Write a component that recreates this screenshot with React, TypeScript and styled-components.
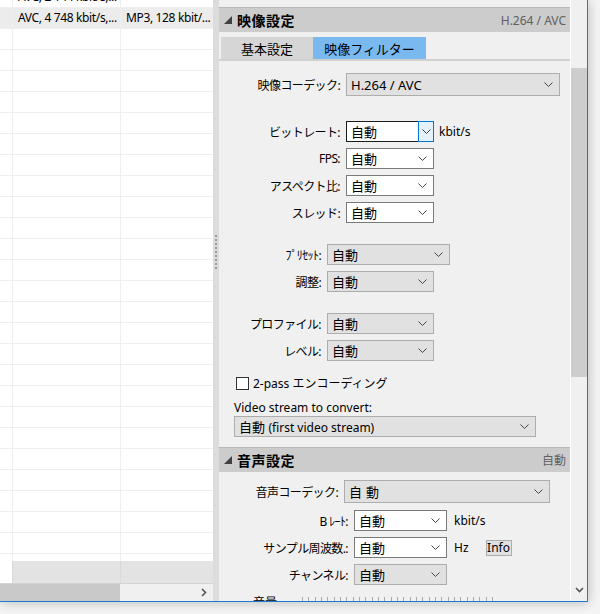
import styled, { createGlobalStyle } from "styled-components";

// Converter window: file list on the left, video/audio settings on the right.

const GlobalStyle = createGlobalStyle`
  html, body { margin: 0; padding: 0; background: #f4f4f4; }
  body {
    font-family: "Noto Sans", "Noto Sans CJK JP", sans-serif;
    font-size: 12px;
    color: #000;
  }
  #root { width: 600px; height: 614px; overflow: hidden; }
`;

const Window = styled.div`
  display: flex;
  width: 587px;
  height: 601px;
  background: #f0f0f0;
  border-right: 1px solid #1f79d1;
  border-bottom: 1px solid #1f79d1;
  box-shadow: 1px 1px 10px rgba(0, 0, 0, 0.22);
`;

/* ---------- left: file table ---------- */

const LeftPane = styled.div`
  width: 213px;
  display: flex;
  flex-direction: column;
`;
const Table = styled.div`
  flex: 1;
  overflow: hidden;
  background: #fff;
`;
const TableBody = styled.div`
  margin-top: -13px;
`;
const TRow = styled.div<{ $selected?: boolean }>`
  display: grid;
  grid-template-columns: 13px 108px 1fr;
  height: 21px;
  box-sizing: border-box;
  border-bottom: 1px solid #efefef;
  background: ${({ $selected }) => ($selected ? "#ececec" : "#fff")};
`;
const TCell = styled.div`
  box-sizing: border-box;
  border-right: 1px solid #efefef;
  padding-left: 5px;
  line-height: 20px;
  white-space: nowrap;
  overflow: hidden;
  letter-spacing: -0.35px;
  &:last-child { border-right: none; }
`;
const Footer = styled.div`
  display: grid;
  grid-template-columns: 13px 108px 1fr;
  height: 22px;
  background: #e3e3e3;
  border-bottom: 1px solid #d4d4d4;
  div { border-right: 1px solid #d9d9d9; }
  div:first-child { background: #fff; }
  div:last-child { border-right: none; }
`;
const HScroll = styled.div`
  height: 17px;
  display: flex;
  align-items: center;
  background: #f0f0f0;
`;
const HThumb = styled.div`
  width: 120px;
  height: 100%;
  background: #c9c9c9;
`;
const HArrow = styled.div`
  margin-left: auto;
  margin-right: 6px;
  display: flex;
`;

const Splitter = styled.div`
  width: 6px;
  background: #dcdcdc;
  display: flex;
  justify-content: center;
`;
const Grip = styled.div`
  margin-top: 235px;
  width: 2px;
  height: 34px;
  background: repeating-linear-gradient(to bottom, #9a9a9a 0 2px, transparent 2px 4px);
`;

/* ---------- right: settings ---------- */

const RightContent = styled.div`
  flex: 1;
  overflow: hidden;
  padding-top: 7px;
  display: flex;
  flex-direction: column;
`;
const SectionHeader = styled.div<{ $mt?: number }>`
  box-sizing: border-box;
  height: 25px;
  flex: none;
  margin-top: ${({ $mt }) => $mt ?? 0}px;
  display: flex;
  align-items: center;
  padding: 0 4px 0 5px;
  background: #cccccc;
  border-top: 1px solid #b8b8b8;
`;
const SectionTitle = styled.span`
  margin-left: 5px;
  font-size: 14px;
  font-weight: 700;
  letter-spacing: 0.5px;
`;
const SectionValue = styled.span`
  margin-left: auto;
  color: #606060;
  font-size: 12px;
`;
const TabStrip = styled.div`
  box-sizing: border-box;
  flex: none;
  height: 24px;
  margin-top: 5px;
  padding-left: 2px;
  display: flex;
  border-bottom: 2px solid #d0d0d0;
`;
const Tab = styled.div<{ $w: number; $active?: boolean }>`
  width: ${({ $w }) => $w}px;
  display: flex;
  align-items: center;
  justify-content: center;
  font-size: 13px;
  background: ${({ $active }) => ($active ? "#7ab9f0" : "#d6d6d6")};
`;
const Group = styled.div<{ $mt: number; $gap?: number }>`
  flex: none;
  display: flex;
  flex-direction: column;
  gap: ${({ $gap }) => $gap ?? 6}px;
  margin-top: ${({ $mt }) => $mt}px;
`;
const Field = styled.div`
  display: flex;
  align-items: center;
`;
const Label = styled.div<{ $w: number }>`
  width: ${({ $w }) => $w}px;
  margin-right: 6px;
  text-align: right;
  white-space: nowrap;
  font-size: 12px;
  letter-spacing: -0.6px;
`;
const Unit = styled.span<{ $ml: number }>`
  margin-left: ${({ $ml }) => $ml}px;
  font-size: 12px;
`;
const SelectBox = styled.div<{ $w: number; $h?: number; $white?: boolean; $focus?: boolean }>`
  box-sizing: border-box;
  width: ${({ $w }) => $w}px;
  height: ${({ $h }) => $h ?? 21}px;
  display: flex;
  align-items: center;
  background: ${({ $white }) => ($white ? "#fff" : "#e1e1e1")};
  border: 1px solid ${({ $white, $focus }) => ($focus ? "#1b1b1b" : $white ? "#7a7a7a" : "#adadad")};
`;
const SelectValue = styled.div<{ $spaced?: boolean }>`
  flex: 1;
  padding-left: 4px;
  font-size: 13px;
  white-space: nowrap;
  overflow: hidden;
  letter-spacing: ${({ $spaced }) => ($spaced ? "4px" : "0")};
  small { font-size: 12px; }
`;
const DropArrow = styled.div<{ $focus?: boolean }>`
  box-sizing: border-box;
  width: 16px;
  align-self: stretch;
  display: flex;
  align-items: center;
  justify-content: center;
  margin: ${({ $focus }) => ($focus ? "-1px -1px -1px 0" : "0 3px 0 0")};
  background: ${({ $focus }) => ($focus ? "#e5f1fb" : "transparent")};
  border: ${({ $focus }) => ($focus ? "1px solid #0078d7" : "none")};
`;
const CheckRow = styled.label`
  flex: none;
  display: flex;
  align-items: center;
  height: 20px;
  margin-top: 12px;
  padding-left: 17px;
  gap: 4px;
  font-size: 12px;
`;
const CheckBox = styled.span`
  box-sizing: border-box;
  width: 13px;
  height: 13px;
  background: #fff;
  border: 1px solid #333;
`;
const StreamLabel = styled.div`
  flex: none;
  margin-top: 8px;
  padding-left: 15px;
  line-height: 14px;
  font-size: 12px;
`;
const StreamSelect = styled.div`
  flex: none;
  margin-top: 1px;
  padding-left: 15px;
`;
const InfoButton = styled.button`
  box-sizing: border-box;
  margin-left: 17px;
  width: 26px;
  height: 16px;
  padding: 0;
  background: #e1e1e1;
  border: 1px solid #adadad;
  font-family: inherit;
  font-size: 12px;
  line-height: 13px;
  color: #000;
`;
const VolumeRow = styled.div`
  flex: none;
  display: flex;
  align-items: flex-start;
  margin-top: 12px;
  height: 12px;
`;
const VolumeLabel = styled.div`
  width: 58px;
  text-align: right;
  font-size: 12px;
  line-height: 12px;
`;
const Ticks = styled.div`
  margin-left: 25px;
  margin-top: 0;
  width: 191px;
  height: 4px;
  background: repeating-linear-gradient(to right, #a8a8a8 0 1px, transparent 1px 6.33px);
`;

const VScroll = styled.div`
  width: 16px;
  border-left: 1px solid #fff;
  background: #f0f0f0;
  display: flex;
  flex-direction: column;
`;
const VThumb = styled.div`
  margin-top: 68px;
  height: 309px;
  background: #cdcdcd;
`;
const VArrow = styled.div`
  margin-top: auto;
  margin-bottom: 8px;
  display: flex;
  justify-content: center;
`;

function Chevron({ color = "#444" }: { color?: string }) {
  return (
    <svg width="9" height="5" viewBox="0 0 9 5" aria-hidden="true">
      <polyline points="0.5,0.5 4.5,4.5 8.5,0.5" fill="none" stroke={color} strokeWidth="1" />
    </svg>
  );
}

function Triangle() {
  return (
    <svg width="8" height="8" viewBox="0 0 8 8" aria-hidden="true">
      <polygon points="8,0 8,8 0,8" fill="#404040" />
    </svg>
  );
}

type SelectProps = {
  w: number;
  h?: number;
  white?: boolean;
  focus?: boolean;
  spaced?: boolean;
  children: React.ReactNode;
};

function Select({ w, h, white, focus, spaced, children }: SelectProps) {
  return (
    <SelectBox $w={w} $h={h} $white={white} $focus={focus}>
      <SelectValue $spaced={spaced}>{children}</SelectValue>
      <DropArrow $focus={focus}>
        <Chevron />
      </DropArrow>
    </SelectBox>
  );
}

const rows = Array.from({ length: 28 }, (_, i) => i);

export default function App() {
  return (
    <>
      <GlobalStyle />
      <Window>
        <LeftPane>
          <Table>
            <TableBody>
              {rows.map((i) => (
                <TRow key={i} $selected={i === 1}>
                  <TCell />
                  <TCell>{i === 0 ? "AVC, 2 144 kbit/s,..." : i === 1 ? "AVC, 4 748 kbit/s,..." : ""}</TCell>
                  <TCell>{i === 1 ? "MP3, 128 kbit/..." : ""}</TCell>
                </TRow>
              ))}
            </TableBody>
          </Table>
          <Footer>
            <div />
            <div />
            <div />
          </Footer>
          <HScroll>
            <HThumb />
            <HArrow>
              <svg width="6" height="9" viewBox="0 0 6 9" aria-hidden="true">
                <polyline points="1,1 4.5,4.5 1,8" fill="none" stroke="#555" strokeWidth="1.6" />
              </svg>
            </HArrow>
          </HScroll>
        </LeftPane>

        <Splitter>
          <Grip />
        </Splitter>

        <RightContent>
          <SectionHeader>
            <Triangle />
            <SectionTitle>映像設定</SectionTitle>
            <SectionValue>H.264 / AVC</SectionValue>
          </SectionHeader>
          <TabStrip>
            <Tab $w={92}>基本設定</Tab>
            <Tab $w={113} $active>映像フィルター</Tab>
          </TabStrip>

          <Group $mt={12}>
            <Field>
              <Label $w={121}>映像コーデック:</Label>
              <Select w={214} h={23}>H.264 / AVC</Select>
            </Field>
          </Group>

          <Group $mt={25}>
            <Field>
              <Label $w={121}>ビットレート:</Label>
              <Select w={88} white focus>自動</Select>
              <Unit $ml={5}>kbit/s</Unit>
            </Field>
            <Field>
              <Label $w={121}>FPS:</Label>
              <Select w={88} white>自動</Select>
            </Field>
            <Field>
              <Label $w={121}>アスペクト比:</Label>
              <Select w={88} white>自動</Select>
            </Field>
            <Field>
              <Label $w={121}>スレッド:</Label>
              <Select w={88} white>自動</Select>
            </Field>
          </Group>

          <Group $mt={21}>
            <Field>
              <Label $w={102}>ﾌﾟﾘｾｯﾄ:</Label>
              <Select w={123}>自動</Select>
            </Field>
            <Field>
              <Label $w={102}>調整:</Label>
              <Select w={107}>自動</Select>
            </Field>
          </Group>

          <Group $mt={21}>
            <Field>
              <Label $w={102}>プロファイル:</Label>
              <Select w={107}>自動</Select>
            </Field>
            <Field>
              <Label $w={102}>レベル:</Label>
              <Select w={107}>自動</Select>
            </Field>
          </Group>

          <CheckRow>
            <CheckBox />
            2-pass エンコーディング
          </CheckRow>
          <StreamLabel>Video stream to convert:</StreamLabel>
          <StreamSelect>
            <Select w={302}>
              自動 <small>(first video stream)</small>
            </Select>
          </StreamSelect>

          <SectionHeader $mt={10}>
            <Triangle />
            <SectionTitle>音声設定</SectionTitle>
            <SectionValue>自動</SectionValue>
          </SectionHeader>

          <Group $mt={8}>
            <Field>
              <Label $w={119}>音声コーデック:</Label>
              <Select w={206} h={23} spaced>自動</Select>
            </Field>
          </Group>

          <Group $mt={7}>
            <Field>
              <Label $w={129}>B ﾚｰﾄ:</Label>
              <Select w={93} white>自動</Select>
              <Unit $ml={7}>kbit/s</Unit>
            </Field>
            <Field>
              <Label $w={129}>サンプル周波数.:</Label>
              <Select w={93} white>自動</Select>
              <Unit $ml={7}>Hz</Unit>
              <InfoButton>Info</InfoButton>
            </Field>
            <Field>
              <Label $w={129}>チャンネル:</Label>
              <Select w={93}>自動</Select>
            </Field>
          </Group>

          <VolumeRow>
            <VolumeLabel>音量</VolumeLabel>
            <Ticks />
          </VolumeRow>
        </RightContent>

        <VScroll>
          <VThumb />
          <VArrow>
            <svg width="9" height="6" viewBox="0 0 9 6" aria-hidden="true">
              <polyline points="1,1 4.5,4.5 8,1" fill="none" stroke="#555" strokeWidth="1.6" />
            </svg>
          </VArrow>
        </VScroll>
      </Window>
    </>
  );
}
